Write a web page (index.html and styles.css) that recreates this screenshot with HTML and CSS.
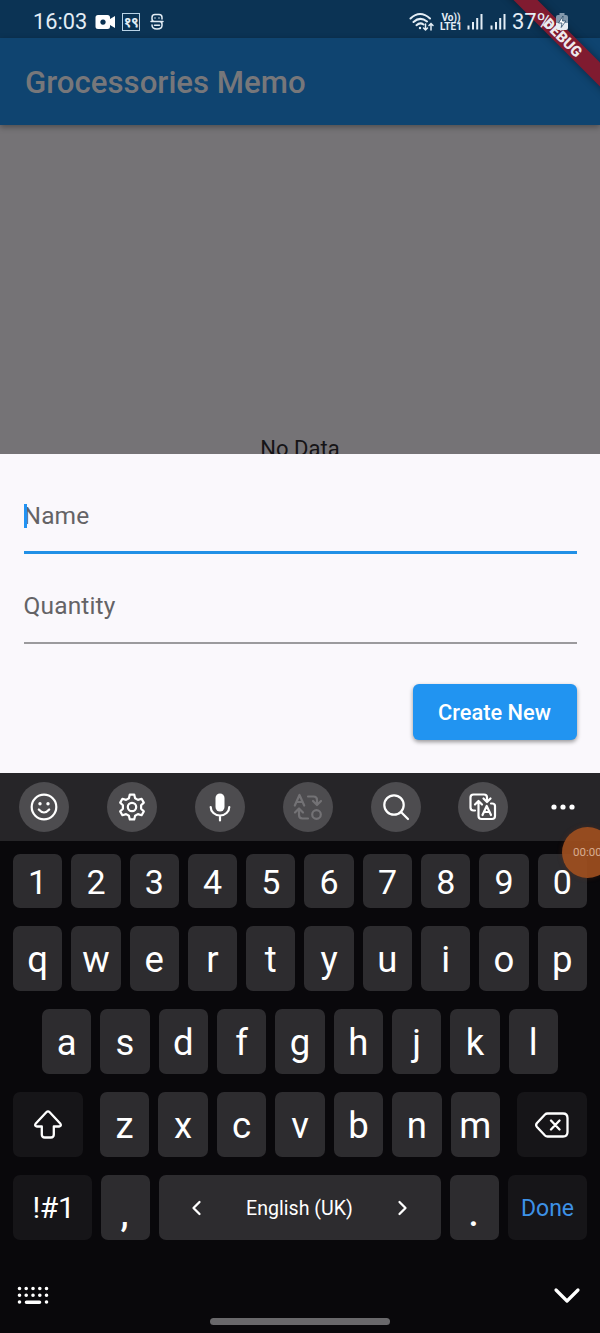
FILE: index.html
```html
<!DOCTYPE html>
<html lang="en">
<head>
<meta charset="utf-8">
<title>Grocessories Memo</title>
<link rel="stylesheet" href="styles.css">
</head>
<body>
<div class="phone">
  <div class="debug-clip"><div class="debug">DEBUG</div></div>
  <div class="status">
    <span class="clock">16:03</span>
    <svg class="cam" width="21" height="16" viewBox="0 0 21 16"><path fill="#fff" fill-rule="evenodd" d="M3 1h9.500q2.500 0 2.500 2.500v1.500l5-3v12l-5-3v1.500q0 2.500-2.500 2.500H3Q.5 15 .5 12.500v-9Q.5 1 3 1zM8 5.400a2.700 2.700 0 1 0 .01 0z"/></svg>
    <span class="dev">१९</span>
    <svg class="sicon" width="14" height="18" viewBox="0 0 14 18" fill="none" stroke="#e3edf5" stroke-width="1.500" stroke-linecap="round"><path d="M12 6V4.500Q12 1.500 9 1.500H5Q2 1.500 2 4.500V6q0 2.500 2.500 2.500h5Q12 8.500 12 11v1.500q0 3.500-5 3.500t-5-4M1 8.500h12M4.500 12.300h5M5 5h.01M9 5h.01"/></svg>
    <span class="grow"></span>
    <svg class="wifi" width="26" height="20" viewBox="0 0 26 20" fill="none" stroke="#e3edf5" stroke-width="2" stroke-linecap="round"><path d="M1.500 6.500Q11 -2.500 21 6.500M4.500 10Q11 4 18 9.500M7.500 13.200Q11 10 14.500 12.500"/><circle cx="11" cy="16" r="1.200" fill="#e3edf5" stroke="none"/><path stroke-width="1.500" d="M16.500 12v6M14.500 16l2 2 2-2M22 18v-6.500M20 13.500l2-2 2 2"/></svg>
    <span class="lte"><span>Vo))</span><span>LTE1</span></span>
    <svg class="sig" width="16" height="17" viewBox="0 0 16 17" stroke="#e3edf5" stroke-width="2"><path d="M1.500 16.500v-4M6 16.500V9M10.200 16.500V5M14.500 16.500V1"/></svg>
    <svg class="sig" width="16" height="17" viewBox="0 0 16 17" stroke="#e3edf5" stroke-width="2"><path d="M1.500 16.500v-4M6 16.500V9M10.200 16.500V5M14.500 16.500V1"/></svg>
    <span class="pct">37%</span>
    <svg class="bat" width="12" height="17" viewBox="0 0 12 17"><path fill="#8298ac" d="M3.500 0h5v2H10q2 0 2 2v6H0V4q0-2 2-2h1.500z"/><path fill="#e9eef3" d="M0 10h12v5q0 2-2 2H2q-2 0-2-2z"/><path fill="#fff" stroke="#183c5c" stroke-width=".7" d="M7 3 2.500 10H6l-.8 4.500L9.800 8H6.500z"/></svg>
  </div>
  <header class="appbar">Grocessories Memo</header>
  <main class="body">No Data</main>
  <section class="sheet">
    <div class="field active"><i class="caret"></i>Name</div>
    <div class="field">Quantity</div>
    <button class="create">Create New</button>
  </section>
  <section class="tools">
    <span class="tool"><svg viewBox="0 0 30 30"><circle cx="15" cy="15" r="12.300"/><path d="M9.800 17.500q5.200 6 10.400 0"/><g fill="#fff" stroke="none"><circle cx="11" cy="11.700" r="1.700"/><circle cx="19" cy="11.700" r="1.700"/></g></svg></span>
    <span class="tool"><svg viewBox="0 0 30 30"><circle cx="15" cy="15" r="4.200"/><path stroke-linejoin="round" d="M12.800 2.600h4.400l.9 3.700 2.800 1.600 3.700-1.100 2.200 3.800-2.700 2.700v3.400l2.700 2.700-2.200 3.800-3.700-1.100-2.800 1.600-.9 3.700h-4.400l-.9-3.700-2.800-1.600-3.700 1.100-2.200-3.800 2.700-2.700v-3.400l-2.700-2.700 2.200-3.800 3.700 1.100 2.800-1.600z"/></svg></span>
    <span class="tool"><svg viewBox="0 0 30 30"><rect x="10.500" y="1.500" width="9" height="18" rx="4.500" fill="#fff" stroke="none"/><path d="M5.700 15a9.300 8.500 0 0 0 18.600 0M15 23.500v5"/></svg></span>
    <span class="tool dim"><svg viewBox="0 0 30 30"><path d="M1.800 13.500 6.500 3l4.700 10.500M3.500 10h6M15 4.500h5.500q3.500 0 3.500 3.500v3.500M20 9l4 4 4-4M15 26.500H9.500Q6 26.500 6 23v-4.500M2 20.500l4-4 4 4"/><circle cx="23.500" cy="22.500" r="4.300"/></svg></span>
    <span class="tool"><svg viewBox="0 0 30 30"><circle cx="13" cy="13" r="9.700"/><path d="m20 20 7 7"/></svg></span>
    <span class="tool"><svg viewBox="0 0 30 30"><path d="M7 18.500H5.500q-3 0-3-3v-10q0-3 3-3h10.500q3 0 3 3V9M15.500 6.500l3.500 3.500 3.500-3.500M11 10.500h-.5V24q0 3 3 3H24q3 0 3-3V14q0-2.500-3-2.500h-1M10.500 19V9.500M7 12.500 10.500 9l3.500 3.500M14.500 23l4.200-9 4.300 9M16.200 20h5"/></svg></span>
    <svg class="more" width="24" height="6" viewBox="0 0 24 6" fill="#fff"><circle cx="3" cy="3" r="2.600"/><circle cx="12" cy="3" r="2.600"/><circle cx="21" cy="3" r="2.600"/></svg>
    <div class="rec"><span>00:00</span></div>
  </section>
  <section class="keys">
    <div class="row nums"><b>1</b><b>2</b><b>3</b><b>4</b><b>5</b><b>6</b><b>7</b><b>8</b><b>9</b><b>0</b></div>
    <div class="row"><b>q</b><b>w</b><b>e</b><b>r</b><b>t</b><b>y</b><b>u</b><b>i</b><b>o</b><b>p</b></div>
    <div class="row mid"><b>a</b><b>s</b><b>d</b><b>f</b><b>g</b><b>h</b><b>j</b><b>k</b><b>l</b></div>
    <div class="row low">
      <b class="fn"><svg width="30" height="32" viewBox="0 0 30 32"><path d="M13.300 3.200 2.800 14.500Q1 17 4 17.500h4.800v8q0 3 3 3h6q3 0 3-3v-8H26q3-.5 1.200-3L16.700 3.200q-1.700-1.700-3.400 0z"/></svg></b>
      <div class="letters"><b>z</b><b>x</b><b>c</b><b>v</b><b>b</b><b>n</b><b>m</b></div>
      <b class="fn"><svg width="34" height="28" viewBox="0 0 34 28"><path d="M12.500 2.500H28q4.500 0 4.500 4.500v14q0 4.500-4.500 4.500H12.500q-1.500 0-2.500-1L2 16q-1.700-2 0-4l8-8.500q1-1 2.500-1zM16 9.500l8.500 9M24.500 9.500l-8.500 9"/></svg></b>
    </div>
    <div class="row last">
      <b class="fn sym">!#1</b><b class="punct">,</b>
      <b class="space"><svg width="12" height="18" viewBox="0 0 12 18"><path d="M9.500 3 3.500 9l6 6"/></svg><span>English (UK)</span><svg width="12" height="18" viewBox="0 0 12 18"><path d="m2.500 3 6 6-6 6"/></svg></b>
      <b class="punct">.</b><b class="fn done">Done</b>
    </div>
    <div class="nav">
      <svg width="32" height="20" viewBox="0 0 32 20" fill="none" stroke="#fff" stroke-width="3.600" stroke-linecap="round"><path d="M2.500 2.500h.01M9.200 2.500h.01M16 2.500h.01M22.800 2.500h.01M29.500 2.500h.01M2.500 9.300h.01M9.200 9.300h.01M16 9.300h.01M22.800 9.300h.01M29.500 9.300h.01M2.500 16h.01M9.500 16.200h13M29.500 16h.01"/></svg>
      <svg width="28" height="18" viewBox="0 0 28 18" fill="none" stroke="#fff" stroke-width="3.200" stroke-linecap="round" stroke-linejoin="round"><path d="m3 3 11 11L25 3"/></svg>
    </div>
    <div class="pill"></div>
  </section>
</div>
</body>
</html>
```
FILE: styles.css
```css
* { box-sizing: border-box; }
body { margin: 0; font-family: Roboto, "Noto Sans", sans-serif; }
.phone { position: relative; width: 600px; height: 1333px; display: flex; flex-direction: column; overflow: hidden; background: #09080b; }
.debug-clip { position: absolute; z-index: 2; right: 0; top: 0; width: 100px; height: 125px; overflow: hidden; }
.debug { position: absolute; left: -37px; top: 29px; width: 200px; height: 17px; line-height: 18px; text-align: center; transform: rotate(45deg); background: #801b30; color: #eee9ed; font-size: 14.900px; font-weight: 900; box-shadow: 0 0 8px rgba(0,0,0,.4); }
.status { height: 38px; flex: none; background: #0b3354; color: #e3edf5; display: flex; align-items: center; padding: 5px 32px 0 33px; }
.status > * { position: relative; z-index: 3; flex: none; }
.status .grow { flex: 1; }
.clock { font-size: 21.800px; width: 62px; white-space: nowrap; }
.dev { width: 18px; height: 18px; margin-left: 6px; border: 1.500px solid #b9d3e6; font-size: 14px; font-weight: 700; line-height: 17px; letter-spacing: -.5px; text-align: center; }
.sicon { margin-left: 10px; }
.lte { display: flex; flex-direction: column; align-items: center; width: 22px; margin: 0 5px 0 6px; font-size: 10px; line-height: 9px; font-weight: 700; }
.wifi { margin-right: -1px; }
.sig { margin-right: 7px; }
.pct { font-size: 22px; width: 44px; white-space: nowrap; margin-left: -1px; }
.appbar { position: relative; height: 87px; flex: none; background: #0f4470; color: #77777a; font-size: 31.200px; font-weight: 500; display: flex; align-items: center; padding: 2px 0 0 25px; box-shadow: 0 2px 6px rgba(0,0,0,.35); z-index: 1; }
.body { height: 329px; flex: none; background: #757376; color: #151416; font-size: 22px; line-height: 26px; padding-top: 311px; text-align: center; overflow: hidden; }
.sheet { height: 319px; flex: none; background: #faf8fc; padding: 24px 23.500px 0; display: flex; flex-direction: column; }
.field { position: relative; height: 76px; line-height: 75px; font-size: 24.500px; letter-spacing: .15px; color: #646366; border-bottom: 2px solid #9b9a9d; margin-bottom: 14px; }
.field.active { border-bottom: 3px solid #2190e6; }
.field:nth-child(2) { margin-bottom: 40px; }
.caret { position: absolute; left: 0; top: 26px; width: 3px; height: 24px; background: #2193f3; }
.create { align-self: flex-end; width: 164px; height: 56px; border: 0; border-radius: 6px; background: #2194f1; color: #fff; font: 500 21.800px Roboto, sans-serif; padding: 0; box-shadow: 0 2px 4px rgba(0,0,0,.4); }
.tools { position: relative; height: 68px; flex: none; background: #262528; display: flex; align-items: center; gap: 37.900px; padding: 0 0 0 19px; }
.tool { flex: none; width: 50px; height: 50px; border-radius: 50%; background: #4d4c4f; display: flex; align-items: center; justify-content: center; }
.more { flex: none; margin-left: 5px; }
.tool svg { width: 30px; height: 30px; fill: none; stroke: #fff; stroke-width: 2.200; stroke-linecap: round; stroke-linejoin: round; }
.tool.dim svg { stroke: #737275; }
.rec { position: absolute; z-index: 4; left: 562px; top: 54px; width: 51px; height: 51px; border-radius: 50%; background: rgba(158,79,31,.93); color: #d8ad91; font-size: 11.500px; line-height: 51px; padding-left: 11px; box-shadow: 0 0 5px rgba(120,50,20,.35); }
.keys { flex: 1; display: flex; flex-direction: column; padding: 13px 13px 0; color: #fff; }
.keys b { height: 65px; border-radius: 7px; background: #2d2c2f; font-weight: 400; font-size: 36.500px; display: flex; align-items: center; justify-content: center; flex: 1; min-width: 0; padding-top: 2px; }
.row { display: flex; gap: 9px; margin-bottom: 18px; }
.row.nums b { height: 54px; font-size: 34px; padding-top: 2px; }
.mid { padding: 0 29px; }
.letters { display: flex; gap: 9.200px; width: 400px; }
.low { justify-content: space-between; gap: 0; }
.keys .fn { background: #161518; flex: none; width: 70px; }
.keys .low b { padding-top: 1px; }
.fn svg, .space svg { fill: none; stroke: #fff; stroke-width: 2.300; stroke-linecap: round; stroke-linejoin: round; }
.keys .last .fn { width: 79px; }
.keys .sym { font-size: 30px; letter-spacing: -.3px; padding: 0 0 0 2px; }
.keys .space { flex: none; width: 282px; font-size: 19.600px; justify-content: space-between; padding: 1px 32px 0 31px; }
.keys .punct { padding: 12px 2px 0 0; font-weight: 500; }
.keys .done { color: #3d91e6; font-size: 23px; }
.nav { display: flex; justify-content: space-between; align-items: center; height: 20px; margin: 28px 6px 0 4px; }
.pill { width: 180px; height: 7px; border-radius: 4px; background: #69686b; margin: 12px auto 0; }
```
